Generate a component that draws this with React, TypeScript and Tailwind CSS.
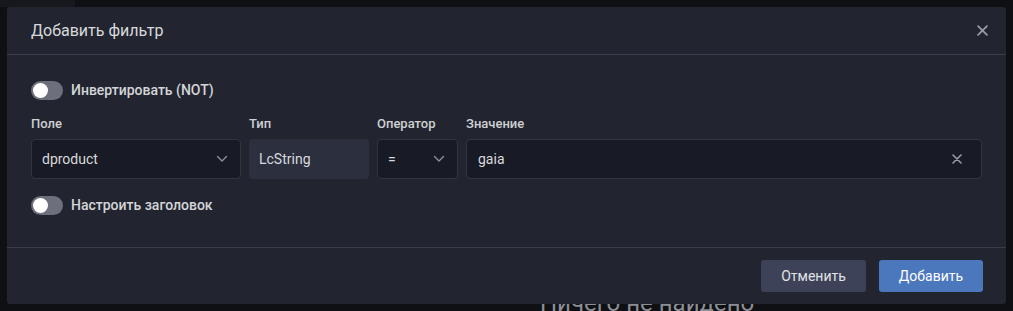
import React from "react";

function Toggle({ label }: { label: string }) {
  return (
    <div className="flex items-center h-[22px]">
      <div className="w-8 h-[19px] rounded-full bg-[#6d707c] flex items-center px-[2px]">
        <div className="w-[15px] h-[15px] rounded-full bg-white" />
      </div>
      <span className="ml-2 text-[14px] font-medium text-[#d4d5d9]">{label}</span>
    </div>
  );
}

function Chevron() {
  return (
    <svg width="12" height="8" viewBox="0 0 12 8" fill="none" className="text-[#8e909a]">
      <path d="M1.5 1.5 L6 6 L10.5 1.5" stroke="currentColor" strokeWidth="1.4" strokeLinecap="round" strokeLinejoin="round" />
    </svg>
  );
}

function Cross({ size = 10, color = "#9a9ca5" }: { size?: number; color?: string }) {
  return (
    <svg width={size} height={size} viewBox="0 0 10 10" fill="none">
      <path d="M1 1 L9 9 M9 1 L1 9" stroke={color} strokeWidth="1.6" strokeLinecap="round" />
    </svg>
  );
}

export default function App() {
  return (
    <div
      className="relative w-[1013px] h-[311px] overflow-hidden bg-[#0f1014] p-[7px]"
      style={{ fontFamily: "Roboto, 'Noto Sans', sans-serif" }}
    >
      <div className="absolute left-[0px] top-0 w-[75px] h-[7px] bg-[#16181e]" />
      <div className="absolute left-[540px] top-[288px] text-[24px] text-[#8c8e96] leading-[30px] whitespace-nowrap">
        Ничего не найдено
      </div>
      <div className="relative w-[999px] h-[297px] bg-[#22252f] rounded-[3px] flex flex-col">
        <div className="h-[48px] border-b border-[#393d4b] flex items-center justify-between pl-6 pr-[18px]">
          <span className="text-[16px] text-[#d8d9dd]">Добавить фильтр</span>
          <Cross size={11} />
        </div>
        <div className="flex-1 px-6 pt-[24px] border-b border-[#393d4b]">
          <Toggle label="Инвертировать (NOT)" />
          <div className="flex gap-2 mt-[15px]">
            <div className="w-[210px] flex flex-col">
              <span className="text-[13px] font-medium text-[#cfd0d4] leading-4">Поле</span>
              <div className="mt-[7px] h-10 rounded-[4px] bg-[#181b25] border border-[#313542] flex items-center justify-between pl-[10px] pr-[12px]">
                <span className="text-[14px] text-[#d8d9dd]">dproduct</span>
                <Chevron />
              </div>
            </div>
            <div className="w-[120px] flex flex-col">
              <span className="text-[13px] font-medium text-[#cfd0d4] leading-4">Тип</span>
              <div className="mt-[7px] h-10 rounded-[4px] bg-[#2c2f3d] flex items-center pl-[10px]">
                <span className="text-[14px] text-[#d8d9dd]">LcString</span>
              </div>
            </div>
            <div className="w-[81px] flex flex-col">
              <span className="text-[13px] font-medium text-[#cfd0d4] leading-4">Оператор</span>
              <div className="mt-[7px] h-10 rounded-[4px] bg-[#181b25] border border-[#313542] flex items-center justify-between pl-[10px] pr-[12px]">
                <span className="text-[14px] text-[#d8d9dd]">=</span>
                <Chevron />
              </div>
            </div>
            <div className="flex-1 flex flex-col">
              <span className="text-[13px] font-medium text-[#cfd0d4] leading-4">Значение</span>
              <div className="mt-[7px] h-10 rounded-[4px] bg-[#181b25] border border-[#313542] flex items-center justify-between pl-[11px] pr-[19px]">
                <span className="text-[14px] text-[#d8d9dd]">gaia</span>
                <Cross size={10} />
              </div>
            </div>
          </div>
          <div className="mt-[15px]">
            <Toggle label="Настроить заголовок" />
          </div>
        </div>
        <div className="h-[56px] flex items-center justify-end gap-[13px] pl-6 pr-[23px]">
          <button className="w-[105px] h-8 rounded-[3px] bg-[#3d4258] text-[14px] text-[#e2e3e6]">Отменить</button>
          <button className="w-[104px] h-8 rounded-[3px] bg-[#4b77bd] text-[14px] text-white">Добавить</button>
        </div>
      </div>
    </div>
  );
}
